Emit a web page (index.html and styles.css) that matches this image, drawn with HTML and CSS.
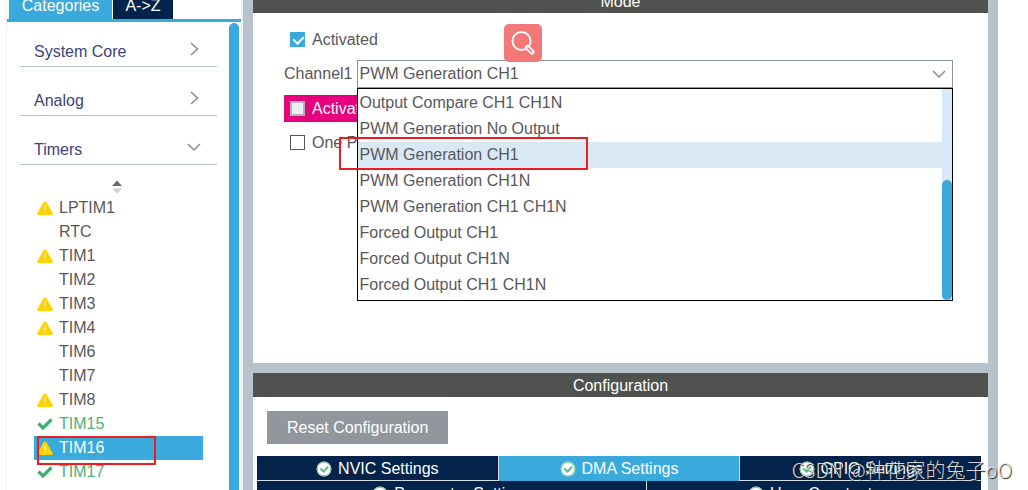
FILE: index.html
```html
<!DOCTYPE html>
<html lang="en">
<head>
  <meta charset="UTF-8">
  <title>TIM16 Mode and Configuration</title>
  <meta name="viewport" content="width=device-width, initial-scale=1.0">
  <link rel="stylesheet" href="styles.css">
</head>
<body>

<svg class="defs" aria-hidden="true">
  <symbol id="warn" viewBox="0 0 16 14">
    <path d="M8 0.5 Q9 0.5 9.6 1.6 L15.6 12 Q16.4 14 14.6 14 H1.4 Q-0.4 14 0.4 12 L6.4 1.6 Q7 0.5 8 0.5 Z" fill="#ffd200"/>
    <path d="M8 4.5 V9.3 M8 10.6 V12.2" stroke="#fff3b8" stroke-width="1.4"/>
  </symbol>
  <symbol id="tick" viewBox="0 0 16 14">
    <path d="M1.5 6.5 L6 11 L14.5 2.5" fill="none" stroke="#3fae6e" stroke-width="3.2"/>
  </symbol>
  <symbol id="ok" viewBox="0 0 16 16">
    <circle cx="8" cy="8" r="7.4" fill="#fff"/>
    <circle cx="8" cy="8" r="6.8" fill="none" stroke="#7cc99a" stroke-width="1"/>
    <path d="M4.2 7.6 L7.4 10.6 L12 5.8" fill="none" stroke="#5dbb83" stroke-width="2"/>
  </symbol>
  <symbol id="right" viewBox="0 0 14 14">
    <path d="M4 1 L10.5 7 L4 13" fill="none" stroke="#8c8c8c" stroke-width="1.5"/>
  </symbol>
  <symbol id="down" viewBox="0 0 14 14">
    <path d="M1 4 L7 10 L13 4" fill="none" stroke="#8c8c8c" stroke-width="1.5"/>
  </symbol>
</svg>

<div class="app">
  <aside class="sidebar">
    <div class="side-tabs">
      <button type="button" class="side-tab active">Categories</button>
      <button type="button" class="side-tab">A-&gt;Z</button>
    </div>
    <div class="side-body">
      <div class="side-content">
        <button type="button" class="category">System Core <svg class="chevron"><use href="#right"/></svg></button>
        <button type="button" class="category">Analog <svg class="chevron"><use href="#right"/></svg></button>
        <button type="button" class="category">Timers <svg class="chevron"><use href="#down"/></svg></button>

        <button type="button" class="sort" aria-label="Sort">
          <svg class="sort-icon" viewBox="0 0 10 14">
            <path d="M0 6 L5 0.5 L10 6 Z" fill="#686868"/>
            <path d="M0 8.5 L5 13.5 L10 8.5 Z" fill="#cfcfcf"/>
          </svg>
        </button>

        <ul class="timers">
          <li class="timer"><svg class="state"><use href="#warn"/></svg>LPTIM1</li>
          <li class="timer"><span class="state"></span>RTC</li>
          <li class="timer"><svg class="state"><use href="#warn"/></svg>TIM1</li>
          <li class="timer"><span class="state"></span>TIM2</li>
          <li class="timer"><svg class="state"><use href="#warn"/></svg>TIM3</li>
          <li class="timer"><svg class="state"><use href="#warn"/></svg>TIM4</li>
          <li class="timer"><span class="state"></span>TIM6</li>
          <li class="timer"><span class="state"></span>TIM7</li>
          <li class="timer"><svg class="state"><use href="#warn"/></svg>TIM8</li>
          <li class="timer enabled"><svg class="state"><use href="#tick"/></svg>TIM15</li>
          <li class="timer selected"><svg class="state"><use href="#warn"/></svg>TIM16<span class="mark mark-timer"></span></li>
          <li class="timer enabled"><svg class="state"><use href="#tick"/></svg>TIM17</li>
        </ul>
      </div>
      <div class="side-scroll"></div>
    </div>
  </aside>

  <main class="main">
    <section class="panel">
      <h2 class="panel-title">Mode</h2>
      <form class="mode-body">
        <label class="check-row"><input type="checkbox" class="check" checked> Activated</label>

        <div class="channel-row">
          <label for="channel1">Channel1</label>
          <div class="combo">
            <select id="channel1" class="combo-select">
              <option>PWM Generation CH1</option>
            </select>
            <svg class="combo-arrow"><use href="#down"/></svg>

            <div class="combo-popup">
              <ul class="options" role="listbox" aria-label="Channel1">
                <li class="option" role="option">Output Compare CH1 CH1N</li>
                <li class="option" role="option">PWM Generation No Output</li>
                <li class="option current" role="option" aria-selected="true">PWM Generation CH1<span class="mark mark-option"></span></li>
                <li class="option" role="option">PWM Generation CH1N</li>
                <li class="option" role="option">PWM Generation CH1 CH1N</li>
                <li class="option" role="option">Forced Output CH1</li>
                <li class="option" role="option">Forced Output CH1N</li>
                <li class="option" role="option">Forced Output CH1 CH1N</li>
              </ul>
              <div class="popup-scroll"><div class="popup-thumb"></div></div>
            </div>

            <button type="button" class="search" aria-label="Search">
              <svg class="search-icon" viewBox="0 0 24 24">
                <circle cx="10.5" cy="10" r="9" fill="none" stroke="#fff" stroke-width="2"/>
                <path d="M16.5 16.5 L21 21" stroke="#fff" stroke-width="5" stroke-linecap="round"/>
                <path d="M17 17 L20.8 20.8" stroke="#f47878" stroke-width="1.6" stroke-linecap="round"/>
              </svg>
            </button>
          </div>
        </div>

        <label class="check-row conflict"><input type="checkbox" class="check" disabled> Activate-Break-Input</label>
        <label class="check-row"><input type="checkbox" class="check"> One Pulse Mode</label>
      </form>
    </section>

    <section class="panel config">
      <h2 class="panel-title">Configuration</h2>
      <div class="config-body">
        <button type="button" class="reset">Reset Configuration</button>
        <div class="config-tabs">
          <button type="button" class="tab"><svg class="ok"><use href="#ok"/></svg>NVIC Settings</button>
          <button type="button" class="tab active"><svg class="ok"><use href="#ok"/></svg>DMA Settings</button>
          <button type="button" class="tab"><svg class="ok"><use href="#ok"/></svg>GPIO Settings</button>
        </div>
        <div class="config-tabs second">
          <button type="button" class="tab"><svg class="ok"><use href="#ok"/></svg>Parameter Settings</button>
          <button type="button" class="tab"><svg class="ok"><use href="#ok"/></svg>User Constants</button>
        </div>
      </div>
    </section>
  </main>

  <div class="watermark">CSDN @种花家的兔子oO</div>
</div>

</body>
</html>
```

FILE: styles.css
```css
* {
  box-sizing: border-box;
}

html, body {
  margin: 0;
  height: 100%;
  overflow: hidden;
  background-color: #fff;
  color: #58585a;
  font-family: "Liberation Sans", Arial, sans-serif;
  font-size: 16px;
  line-height: 24px;
}

button, select {
  font: inherit;
  color: inherit;
  border: 0;
  margin: 0;
  padding: 0;
  background: none;
}

ul {
  list-style: none;
  margin: 0;
  padding: 0;
}

.defs {
  display: none;
}

/* the view is scrolled down a little, so the top bars are cut */
.app {
  display: flex;
  position: relative;
  height: calc(100vh + 11px);
  margin-top: -11px;
  overflow: hidden;
}

/* sidebar */
.sidebar {
  display: flex;
  flex-direction: column;
  flex: 0 0 237px;
  margin-left: 6px;
  border-left: 1px solid #f0f0f0;
  border-right: 2px solid #f0f0f0;
}

.side-tabs {
  display: flex;
  gap: 1px;
  padding-left: 2px;
  border-bottom: 3px solid #3aa9dc;
}

.side-tab {
  height: 30px;
  padding-top: 4px;
  width: 60px;
  color: #fff;
  background-color: #03234b;
}

.side-tab.active {
  width: 103px;
  background-color: #3aa9dc;
}

.side-body {
  display: flex;
  flex: 1;
  justify-content: space-between;
  padding: 1px 2px 0 13px;
}

.side-content {
  flex: 0 0 197px;
}

.category {
  display: flex;
  justify-content: space-between;
  align-items: flex-end;
  width: 100%;
  height: 49px;
  padding: 0 16px 2px 14px;
  color: #3c4377;
  border-bottom: 1px solid #b9c4ca;
}

.category:first-child {
  height: 44px;
}

.chevron {
  width: 14px;
  height: 14px;
  margin-bottom: 8px;
}

.sort {
  display: flex;
  justify-content: center;
  align-items: center;
  width: 100%;
  height: 31px;
  padding: 13px 3px 0 0;
}

.sort-icon {
  width: 10px;
  height: 14px;
}

.timers {
  margin: 0 14px;
}

.timer {
  display: flex;
  position: relative;
  align-items: center;
  gap: 6px;
  height: 24px;
  padding-left: 3px;
}

.state {
  width: 16px;
  height: 14px;
}

.timer.enabled {
  color: #4ab277;
}

.timer.selected {
  color: #fff;
  background-color: #3aa9dc;
}

.side-scroll {
  width: 10px;
  border-radius: 5px 5px 0 0;
  background-color: #3aa9dc;
}

/* red frames drawn over the list rows */
.mark {
  position: absolute;
  z-index: 3;
  border: 2px solid #ed1c24;
}

.mark-timer {
  left: 3px;
  top: 0;
  width: 119px;
  height: 29px;
}

.mark-option {
  left: -19px;
  top: -5px;
  width: 249px;
  height: 33px;
}

/* main column */
.main {
  display: flex;
  flex-direction: column;
  flex: 1;
  gap: 10px;
  margin-right: 30px;
  padding: 0 10px;
  background-color: #b7c3ca;
}

.panel {
  background-color: #fff;
}

.panel-title {
  margin: 0;
  height: 24px;
  color: #fff;
  background-color: #50524f;
  font-size: 16px;
  font-weight: normal;
  line-height: 26px;
  text-align: center;
}

.mode-body {
  display: flex;
  flex-direction: column;
  gap: 7px;
  min-height: 350px;
  padding: 13px 35px 13px 31px;
}

.check-row {
  display: flex;
  align-items: center;
  gap: 7px;
  height: 27px;
  padding-left: 6px;
}

.check {
  appearance: none;
  width: 15px;
  height: 15px;
  margin: 0;
  border: 1px solid #58585a;
  background-color: #fff;
}

.check:checked {
  border-color: #3aa9dc;
  background-color: #3aa9dc;
}

.check:checked::after {
  content: "";
  display: block;
  width: 5px;
  height: 8px;
  margin: 1px 0 0 4px;
  border: solid #fff;
  border-width: 0 2px 2px 0;
  transform: rotate(45deg);
}

.check:disabled {
  border: 2px solid #b0b4b8;
  background-color: #eceef0;
}

.conflict {
  color: #fff;
  background-color: #e6007e;
}

.channel-row {
  display: flex;
  align-items: center;
  gap: 4px;
}

.combo {
  position: relative;
  flex: 1;
}

.combo-select {
  display: block;
  appearance: none;
  width: 100%;
  height: 28px;
  padding-left: 2px;
  border: 1px solid #8f979d;
  border-radius: 0;
  background-color: #fff;
}

.combo-arrow {
  position: absolute;
  top: 7px;
  right: 7px;
  width: 14px;
  height: 14px;
  pointer-events: none;
}

.combo-popup {
  display: flex;
  position: absolute;
  z-index: 2;
  top: 100%;
  left: 0;
  right: 0;
  border: 1px solid #000;
  background-color: #fff;
}

.options {
  flex: 1;
  padding: 1px 0 2px;
}

.option {
  position: relative;
  height: 26px;
  padding-left: 2px;
  line-height: 26px;
}

.option.current {
  background-color: #d9e8f5;
}

.popup-scroll {
  display: flex;
  align-items: flex-end;
  width: 10px;
  background-color: #d9e8f5;
}

.popup-thumb {
  width: 10px;
  height: 57%;
  border-radius: 5px;
  background-color: #3aa9dc;
}

.search {
  display: flex;
  position: absolute;
  z-index: 3;
  top: -36px;
  left: 147px;
  justify-content: center;
  align-items: center;
  width: 38px;
  height: 38px;
  border-radius: 5px;
  background-color: #f47878;
}

.search-icon {
  width: 24px;
  height: 24px;
}

/* configuration */
.config {
  flex: 1;
}

.config-body {
  padding: 14px 7px 0 4px;
}

.reset {
  height: 33px;
  margin: 0 0 12px 10px;
  padding: 0 20px;
  color: #fff;
  background-color: #91979c;
}

.config-tabs {
  display: grid;
  grid-template-columns: 1fr 1fr 1fr;
  gap: 1px;
  height: 25px;
  background-color: #d5dde3;
}

.config-tabs.second {
  grid-template-columns: 7fr 6fr;
}

.tab {
  display: flex;
  justify-content: center;
  align-items: center;
  gap: 6px;
  height: 24px;
  padding-top: 1px;
  color: #fff;
  background-color: #03234b;
}

.tab.active {
  height: 25px;
  background-color: #3aa9dc;
}

.ok {
  width: 16px;
  height: 16px;
}

.watermark {
  position: absolute;
  right: 16px;
  bottom: 5px;
  color: rgba(235, 235, 235, 0.9);
  font-family: "Noto Sans CJK SC", sans-serif;
  font-size: 20px;
  font-weight: 300;
  line-height: 30px;
  text-shadow: 1px 1px 1px #222;
}
```
